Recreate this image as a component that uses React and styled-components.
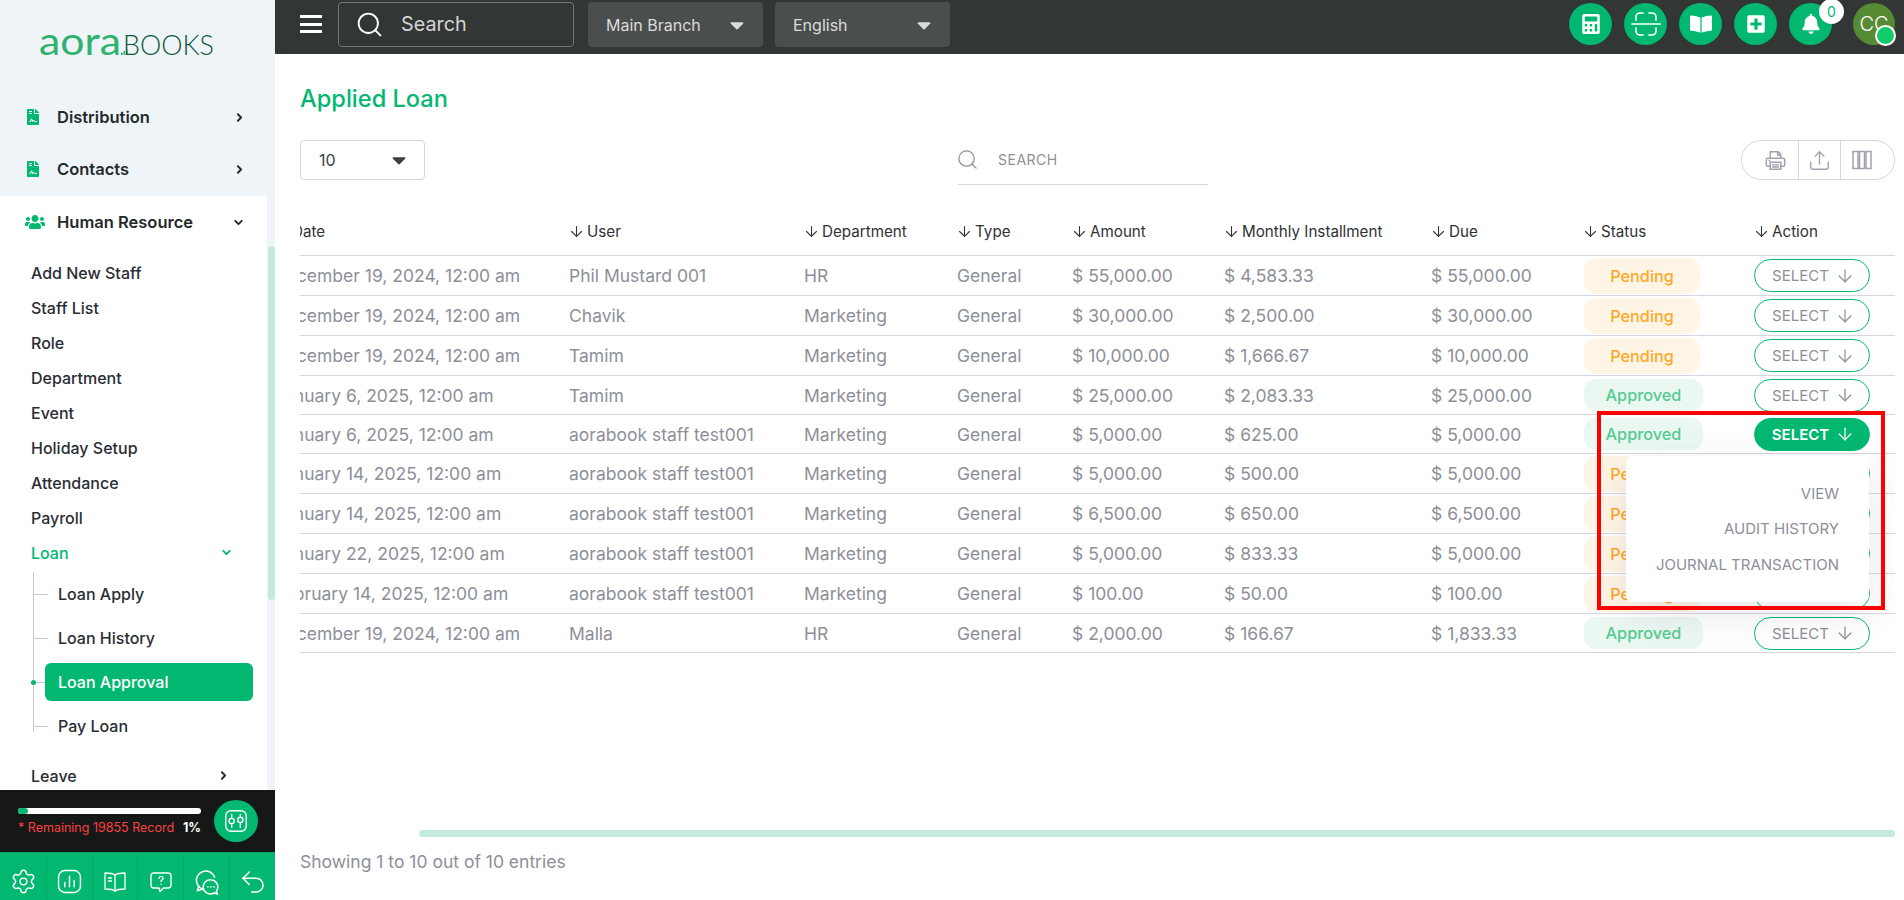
import React from 'react';
import styled, { createGlobalStyle } from 'styled-components';
import { ArrowDown, ChevronRight, ChevronDown, Settings, Undo2, Search as SearchIcon } from 'lucide-react';
import { FaFileContract, FaUsers, FaCalculator, FaBookOpen, FaPlusSquare, FaBell, FaCaretDown } from 'react-icons/fa';

const GREEN = '#02b871';
const LINE = '#d7d5e2';
const GRAY = '#8d8f99';

const Global = createGlobalStyle`
  html, body { margin: 0; padding: 0; height: 100%; overflow: hidden; background: #fff; }
  * { box-sizing: border-box; }
  body { font-family: Inter, "Liberation Sans", sans-serif; }
`;

const Page = styled.div`
  position: relative;
  display: flex;
  width: 1904px;
  height: 900px;
  overflow: hidden;
`;

/* ---------- Sidebar ---------- */
const Sidebar = styled.aside`
  width: 275px;
  flex: none;
  height: 900px;
  display: flex;
  flex-direction: column;
  background: #eff4f9;
`;
const LogoBox = styled.div`
  height: 91px;
  flex: none;
  padding: 28px 0 0 39px;
`;
const TopItem = styled.div`
  height: 52px;
  flex: none;
  display: flex;
  align-items: center;
  padding: 0 ${p => p.$pr || 29}px 0 25px;
  color: #25292b;
  font-size: 16.5px;
  font-weight: 600;
  white-space: nowrap;
  span { flex: 1; }
`;
const Lead = styled.div`
  width: 32px;
  flex: none;
  display: flex;
  align-items: center;
  color: ${GREEN};
`;
const MenuScroll = styled.div`
  position: relative;
  flex: 1;
  min-height: 0;
  margin-top: 1px;
  overflow: hidden;
`;
const WhitePanel = styled.div`
  width: 267px;
  height: 100%;
  background: #fff;
  overflow: hidden;
`;
const Thumb = styled.div`
  position: absolute;
  top: 50px;
  right: 0;
  width: 7px;
  height: 354px;
  border-radius: 4px;
  background: #c3ebdd;
`;
const SubList = styled.div`
  padding-top: 7px;
`;
const SubItem = styled.div`
  height: 35px;
  display: flex;
  align-items: center;
  padding: 0 ${p => p.$pr || 34}px 0 31px;
  font-size: 16px;
  font-weight: 500;
  color: ${p => (p.$active ? GREEN : '#2a2d34')};
  span { flex: 1; }
`;
const Tree = styled.div`
  position: relative;
  margin: 2px 0 10px;
  &::before {
    content: '';
    position: absolute;
    left: 33px;
    top: 0;
    bottom: 16px;
    width: 1px;
    background: #c9c8d2;
  }
`;
const TreeItem = styled.div`
  position: relative;
  display: flex;
  align-items: center;
  margin: ${p => (p.$active ? 3 : 0)}px 14px ${p => (p.$active ? 3 : 0)}px 45px;
  padding: 0 13px;
  font-size: 16px;
  font-weight: 500;
  border-radius: 6px;
  height: ${p => (p.$active ? 38 : 44)}px;
  color: ${p => (p.$active ? '#fff' : '#2a2d34')};
  background: ${p => (p.$active ? GREEN : 'transparent')};
  &::before {
    content: '';
    position: absolute;
    left: -12px;
    width: ${p => (p.$active ? 12 : 15)}px;
    height: 1px;
    top: 50%;
    background: #c9c8d2;
  }
  &::after {
    content: '';
    display: ${p => (p.$active ? 'block' : 'none')};
    position: absolute;
    left: -14px;
    top: calc(50% - 2px);
    width: 5px;
    height: 5px;
    border-radius: 50%;
    background: ${GREEN};
  }
`;
const RecordBar = styled.div`
  height: 62px;
  flex: none;
  background: #161818;
  display: flex;
  align-items: center;
  padding: 0 9px 0 18px;
  gap: 13px;
`;
const RecordInfo = styled.div`
  width: 183px;
  flex: none;
`;
const Progress = styled.div`
  height: 6px;
  border-radius: 3px;
  background: #fff;
  margin-bottom: 6px;
`;
const ProgressFill = styled.div`
  height: 100%;
  border-radius: 3px;
  background: ${GREEN};
`;
const RecordText = styled.div`
  display: flex;
  justify-content: space-between;
  font-size: 12.5px;
  line-height: 15px;
  color: #fb4040;
  white-space: nowrap;
  b { color: #fff; font-weight: 700; }
`;
const RoundGreen = styled.div`
  width: 44px;
  height: 42px;
  flex: none;
  border-radius: 50%;
  background: ${GREEN};
  color: #fff;
  display: flex;
  align-items: center;
  justify-content: center;
`;
const BottomBar = styled.div`
  height: 48px;
  flex: none;
  display: grid;
  grid-template-columns: 46px 46px 45px 46px 46px 46px;
  background: ${GREEN};
`;
const BottomCell = styled.div`
  display: flex;
  align-items: center;
  justify-content: center;
  color: #fff;
  padding-top: 10px;
  border-top: 1px solid #05a566;
  border-left: ${p => (p.$first ? 'none' : '1px solid #05a566')};
`;

/* ---------- Top bar ---------- */
const Main = styled.main`
  flex: 1;
  min-width: 0;
  height: 900px;
  display: flex;
  flex-direction: column;
`;
const TopBar = styled.header`
  height: 54px;
  flex: none;
  background: #323635;
  display: flex;
  align-items: center;
  padding: 0 9px 6px 25px;
`;
const Burger = styled.div`
  width: 22px;
  height: 18px;
  flex: none;
  margin-right: 16px;
  display: flex;
  flex-direction: column;
  justify-content: space-between;
  i { display: block; height: 3px; background: #fff; }
`;
const SearchBox = styled.div`
  width: 236px;
  height: 45px;
  flex: none;
  display: flex;
  align-items: center;
  gap: 17px;
  padding-left: 16px;
  border: 1px solid #6e7a76;
  border-radius: 4px;
  color: #d5d6d6;
  font-size: 19.8px;
`;
const DarkSelect = styled.div`
  width: 175px;
  height: 45px;
  flex: none;
  margin-left: ${p => p.$ml}px;
  display: flex;
  align-items: center;
  justify-content: space-between;
  padding: 1px 15px 0 18px;
  border-radius: 4px;
  background: #4a4e4d;
  color: #dcdcdc;
  font-size: 16px;
`;
const TopRight = styled.div`
  margin-left: auto;
  display: flex;
  align-items: center;
  gap: 12px;
`;
const CircleBtn = styled.div`
  position: relative;
  width: 43px;
  height: 42px;
  border-radius: 50%;
  background: ${GREEN};
  color: #fff;
  display: flex;
  align-items: center;
  justify-content: center;
`;
const Badge = styled.div`
  position: absolute;
  top: -4px;
  right: -12px;
  width: 25px;
  height: 25px;
  border-radius: 50%;
  background: #fff;
  color: ${GREEN};
  font-size: 14px;
  display: flex;
  align-items: center;
  justify-content: center;
`;
const Avatar = styled.div`
  position: relative;
  width: 42px;
  height: 42px;
  margin-left: 9px;
  border-radius: 50%;
  background: #568a33;
  color: #fff;
  font-size: 20px;
  font-weight: 300;
  display: flex;
  align-items: center;
  justify-content: center;
  &::after {
    content: '';
    position: absolute;
    right: -1px;
    bottom: -1px;
    width: 17px;
    height: 17px;
    border-radius: 50%;
    background: #12cc6a;
    border: 2px solid #fff;
  }
`;

/* ---------- Content ---------- */
const Content = styled.div`
  flex: 1;
  min-height: 0;
  display: flex;
  flex-direction: column;
  padding: 0 9px 0 25px;
`;
const Title = styled.h1`
  margin: 31px 0 0;
  height: 28px;
  line-height: 28px;
  font-size: 23.6px;
  font-weight: 500;
  color: ${GREEN};
`;
const Toolbar = styled.div`
  margin-top: 27px;
  display: flex;
  justify-content: space-between;
  align-items: flex-start;
`;
const PageSize = styled.div`
  width: 125px;
  height: 40px;
  display: flex;
  align-items: center;
  justify-content: space-between;
  padding: 0 14px 0 18px;
  border: 1px solid ${LINE};
  border-radius: 4px;
  font-size: 16px;
  color: #3a3f44;
`;
const TableSearch = styled.div`
  width: 250px;
  height: 45px;
  display: flex;
  align-items: center;
  gap: 19px;
  padding-bottom: 5px;
  border-bottom: 1px solid ${LINE};
  color: ${GRAY};
  font-size: 14px;
  letter-spacing: 0.5px;
  svg { margin-left: -2px; }
`;
const Tools = styled.div`
  width: 154px;
  height: 40px;
  display: grid;
  grid-template-columns: 56px 42px 1fr;
  border: 1px solid ${LINE};
  border-radius: 20px;
  color: #a0a2ad;
`;
const ToolCell = styled.div`
  display: flex;
  align-items: center;
  justify-content: ${p => p.$j || 'center'};
  padding: 0 ${p => p.$pr || 0}px 0 ${p => p.$pl || 0}px;
  border-left: ${p => (p.$sep ? `1px solid ${LINE}` : 'none')};
`;
const TableWrap = styled.div`
  overflow: hidden;
  margin-top: 24px;
  padding-bottom: 40px;
`;
const Grid = styled.div`
  margin-left: -26px;
`;
const Row = styled.div`
  display: grid;
  grid-template-columns: 295px 235px 153px 115px 152px 207px 152px 171px 141px;
  align-items: center;
  height: ${p => p.$h}px;
  border-bottom: 1px solid ${LINE};
  font-size: 17.5px;
  color: ${GRAY};
  white-space: nowrap;
`;
const HeadRow = styled(Row)`
  font-size: 15.2px;
  color: #2f3237;
`;
const HeadCell = styled.div`
  display: flex;
  align-items: center;
  gap: 2px;
  padding-bottom: 1px;
  svg { margin-left: -1px; }
`;
const Pill = styled.div`
  width: ${p => (p.$ok ? 119 : 116)}px;
  height: ${p => (p.$ok ? 32 : 36)}px;
  margin-left: 1px;
  display: flex;
  align-items: center;
  justify-content: center;
  border-radius: 12px;
  font-size: 16.3px;
  font-weight: 500;
  color: ${p => (p.$ok ? '#55cb91' : '#ffa726')};
  background: ${p => (p.$ok ? '#ebf8f2' : '#fff5e6')};
`;
const ActionCell = styled.div`
  position: relative;
`;
const SelectBtn = styled.div`
  width: 116px;
  height: 33px;
  display: flex;
  align-items: center;
  justify-content: center;
  gap: 6px;
  padding-left: 3px;
  border: 1px solid ${GREEN};
  border-radius: 17px;
  font-size: 15px;
  font-weight: ${p => (p.$on ? 600 : 400)};
  color: ${p => (p.$on ? '#fff' : GRAY)};
  background: ${p => (p.$on ? GREEN : '#fff')};
`;
const Dropdown = styled.div`
  position: absolute;
  top: 38px;
  right: 26px;
  width: 243px;
  height: 146px;
  padding: 20px 30px 0 0;
  border-radius: 6px;
  background: #fff;
  box-shadow: 0 10px 40px rgba(60, 60, 90, 0.12);
  z-index: 5;
`;
const DropItem = styled.div`
  height: 35.5px;
  display: flex;
  align-items: center;
  justify-content: flex-end;
  font-size: 15px;
  color: ${GRAY};
`;
const ScrollTrack = styled.div`
  margin-top: auto;
  display: flex;
  justify-content: flex-end;
`;
const ScrollThumb = styled.div`
  width: 1476px;
  height: 7px;
  border-radius: 4px;
  background: #c3ebdd;
`;
const Footer = styled.div`
  margin: 16px 0 30px;
  height: 17px;
  line-height: 17px;
  font-size: 17.5px;
  color: ${GRAY};
`;
const Callout = styled.div`
  position: absolute;
  left: 1597px;
  top: 411px;
  width: 288px;
  height: 199px;
  border: 4px solid #ff0000;
  pointer-events: none;
  z-index: 9;
`;

/* ---------- Drawings ---------- */
const stroke = { fill: 'none', stroke: 'currentColor', strokeLinecap: 'round', strokeLinejoin: 'round' };
const Logo = () => (
  <svg width="180" height="36" viewBox="0 0 180 36">
    <text x="0" y="27" fontFamily="Lato, Inter, sans-serif" fontWeight="400" fontSize="38" fill="#2fb26d" textLength="82" lengthAdjust="spacingAndGlyphs">aora</text>
    <g fill="#2fb26d">
      <rect x="82" y="24.5" width="1.6" height="2.5" />
      <rect x="84.5" y="23" width="1.6" height="4" />
      <rect x="87" y="21.5" width="1.6" height="5.5" />
    </g>
    <text x="84" y="27" fontFamily="Lato, Inter, sans-serif" fontWeight="300" fontSize="26.5" fill="#0b5a37" textLength="91" lengthAdjust="spacingAndGlyphs">BOOKS</text>
  </svg>
);
const ScanIcon = () => (
  <svg width="30" height="26" viewBox="0 0 30 26" {...stroke} strokeWidth="1.7">
    <path d="M5 9V6a4 4 0 0 1 4-4h3M18 2h3a4 4 0 0 1 4 4v3M5 17v3a4 4 0 0 0 4 4h3M18 24h3a4 4 0 0 0 4-4v-3M1 13h28" />
  </svg>
);
const Sliders = () => (
  <svg width="26" height="26" viewBox="0 0 24 24" {...stroke} strokeWidth="1.3">
    <rect x="2.5" y="2.5" width="19" height="19" rx="5" />
    <path d="M8 6v3M8 15v3M16 6v2M16 14v4" />
    <circle cx="8" cy="12" r="2.4" />
    <circle cx="16" cy="11" r="2.4" />
  </svg>
);
const ChartBox = () => (
  <svg width="25" height="25" viewBox="0 0 24 24" {...stroke} strokeWidth="1.4">
    <rect x="1.5" y="1.5" width="21" height="21" rx="6" />
    <path d="M7.5 17v-4M12 17V7M16.5 17v-6" />
  </svg>
);
const BookIcon = () => (
  <svg width="24" height="24" viewBox="0 0 24 24" {...stroke} strokeWidth="1.3">
    <path d="M12 5C10 3.5 6 3 2 3v16c4 0 8 .5 10 2 2-1.5 6-2 10-2V3c-4 0-8 .5-10 2z" />
    <path d="M12 5v16M5.5 8h3M5.5 11h3" />
  </svg>
);
const AskIcon = () => (
  <svg width="24" height="24" viewBox="0 0 24 24" {...stroke} strokeWidth="1.4">
    <path d="M5 3h14a3 3 0 0 1 3 3v9a3 3 0 0 1-3 3h-4.5L11 21.5 10 18H5a3 3 0 0 1-3-3V6a3 3 0 0 1 3-3z" />
    <path d="M10 8.2a2 2 0 1 1 2.8 2c-.6.3-.8.7-.8 1.3M12 14.2v.1" />
  </svg>
);
const ChatIcon = () => (
  <svg width="26" height="26" viewBox="0 0 24 24" {...stroke} strokeWidth="1.4">
    <path d="M8 18.5A8.6 8.6 0 1 1 19 7.5" />
    <path d="M8.5 18.5 3 20l1.4-4" />
    <path d="M15.5 10a6.5 6.5 0 0 1 6.5 6.5c0 1.5-.5 2.8-1.3 3.8l.8 2.7-3-1a6.5 6.5 0 1 1-3-12z" />
    <path d="M12.8 16.5h.1M15.6 16.5h.1M18.4 16.5h.1" />
  </svg>
);
const PrintIcon = () => (
  <svg width="21" height="21" viewBox="0 0 24 24" fill="none" stroke="currentColor" strokeWidth="1.7">
    <path d="M6 10V2h9l3 3v5" />
    <path d="M14.5 2v4H18" />
    <rect x="1.5" y="9.5" width="21" height="9" rx="1.5" />
    <rect x="6" y="14" width="12" height="8" fill="#fff" />
    <path d="M8 17h8M8 19.5h8M4 12h2" />
  </svg>
);
const ShareIcon = () => (
  <svg width="21" height="21" viewBox="0 0 24 24" {...stroke} strokeWidth="1.6">
    <path d="M12 16V2M7 7l5-5 5 5" />
    <path d="M2 14v6a2 2 0 0 0 2 2h16a2 2 0 0 0 2-2v-6" />
  </svg>
);
const ColumnsIcon = () => (
  <svg width="20" height="20" viewBox="0 0 20 20" fill="none" stroke="currentColor" strokeWidth="1.5">
    <rect x="1" y="1.5" width="5" height="17" />
    <rect x="7.5" y="1.5" width="5" height="17" />
    <rect x="14" y="1.5" width="5" height="17" />
  </svg>
);

/* ---------- Data ---------- */
const D1 = 'December 19, 2024, 12:00 am';
const S = 'aorabook staff test001';
const rows = [
  [D1, 'Phil Mustard 001', 'HR', '55,000.00', '4,583.33', '55,000.00', 0],
  [D1, 'Chavik', 'Marketing', '30,000.00', '2,500.00', '30,000.00', 0],
  [D1, 'Tamim', 'Marketing', '10,000.00', '1,666.67', '10,000.00', 0],
  ['January 6, 2025, 12:00 am', 'Tamim', 'Marketing', '25,000.00', '2,083.33', '25,000.00', 1],
  ['January 6, 2025, 12:00 am', S, 'Marketing', '5,000.00', '625.00', '5,000.00', 1],
  ['January 14, 2025, 12:00 am', S, 'Marketing', '5,000.00', '500.00', '5,000.00', 0],
  ['January 14, 2025, 12:00 am', S, 'Marketing', '6,500.00', '650.00', '6,500.00', 0],
  ['January 22, 2025, 12:00 am', S, 'Marketing', '5,000.00', '833.33', '5,000.00', 0],
  ['February 14, 2025, 12:00 am', S, 'Marketing', '100.00', '50.00', '100.00', 0],
  [D1, 'Malla', 'HR', '2,000.00', '166.67', '1,833.33', 1],
];
const heads = ['Date', 'User', 'Department', 'Type', 'Amount', 'Monthly Installment', 'Due', 'Status', 'Action'];
const subs = ['Add New Staff', 'Staff List', 'Role', 'Department', 'Event', 'Holiday Setup', 'Attendance', 'Payroll'];
const Chev = ({ down }) => (down
  ? <ChevronDown size={13} strokeWidth={3.5} />
  : <ChevronRight size={13} strokeWidth={3.5} />);

export default function App() {
  return (
    <Page>
      <Global />
      <Sidebar>
        <LogoBox><Logo /></LogoBox>
        <TopItem><Lead><FaFileContract size={16} /></Lead><span>Distribution</span><Chev /></TopItem>
        <TopItem><Lead><FaFileContract size={16} /></Lead><span>Contacts</span><Chev /></TopItem>
        <MenuScroll>
          <WhitePanel>
            <TopItem $pr={22}><Lead><FaUsers size={20} /></Lead><span>Human Resource</span><Chev down /></TopItem>
            <SubList>
              {subs.map(s => <SubItem key={s}><span>{s}</span></SubItem>)}
              <SubItem $active><span>Loan</span><Chev down /></SubItem>
              <Tree>
                <TreeItem>Loan Apply</TreeItem>
                <TreeItem>Loan History</TreeItem>
                <TreeItem $active>Loan Approval</TreeItem>
                <TreeItem>Pay Loan</TreeItem>
              </Tree>
              <SubItem $pr={37}><span>Leave</span><Chev /></SubItem>
            </SubList>
          </WhitePanel>
          <Thumb />
        </MenuScroll>
        <RecordBar>
          <RecordInfo>
            <Progress><ProgressFill style={{ width: '10px' }} /></Progress>
            <RecordText><span>* Remaining 19855 Record</span><b>1%</b></RecordText>
          </RecordInfo>
          <RoundGreen><Sliders /></RoundGreen>
        </RecordBar>
        <BottomBar>
          <BottomCell $first><Settings size={27} strokeWidth={1.3} /></BottomCell>
          <BottomCell><ChartBox /></BottomCell>
          <BottomCell><BookIcon /></BottomCell>
          <BottomCell><AskIcon /></BottomCell>
          <BottomCell><ChatIcon /></BottomCell>
          <BottomCell><Undo2 size={30} strokeWidth={1.3} /></BottomCell>
        </BottomBar>
      </Sidebar>

      <Main>
        <TopBar>
          <Burger><i /><i /><i /></Burger>
          <SearchBox><SearchIcon size={29} strokeWidth={1.6} color="#fff" />Search</SearchBox>
          <DarkSelect $ml={14}>Main Branch<FaCaretDown size={22} /></DarkSelect>
          <DarkSelect $ml={12}>English<FaCaretDown size={22} /></DarkSelect>
          <TopRight>
            <CircleBtn><FaCalculator size={20} /></CircleBtn>
            <CircleBtn><ScanIcon /></CircleBtn>
            <CircleBtn><FaBookOpen size={22} /></CircleBtn>
            <CircleBtn><FaPlusSquare size={20} /></CircleBtn>
            <CircleBtn><FaBell size={20} /><Badge>0</Badge></CircleBtn>
            <Avatar>CC</Avatar>
          </TopRight>
        </TopBar>
        <Content>
          <Title>Applied Loan</Title>
          <Toolbar>
            <PageSize>10<FaCaretDown size={22} color="#3b4144" /></PageSize>
            <TableSearch><SearchIcon size={23} strokeWidth={1.3} />SEARCH</TableSearch>
            <Tools>
              <ToolCell $j="flex-end" $pr={12}><PrintIcon /></ToolCell>
              <ToolCell $sep><ShareIcon /></ToolCell>
              <ToolCell $sep $j="flex-start" $pl={11}><ColumnsIcon /></ToolCell>
            </Tools>
          </Toolbar>
          <TableWrap>
            <Grid>
              <HeadRow $h={47}>
                {heads.map(h => <HeadCell key={h}><ArrowDown size={17} strokeWidth={1.5} />{h}</HeadCell>)}
              </HeadRow>
              {rows.map((r, i) => (
                <Row key={i} $h={r[6] ? 39 : 40}>
                  <div>{r[0]}</div>
                  <div>{r[1]}</div>
                  <div>{r[2]}</div>
                  <div>General</div>
                  <div>$ {r[3]}</div>
                  <div>$ {r[4]}</div>
                  <div>$ {r[5]}</div>
                  <div><Pill $ok={r[6] === 1}>{r[6] ? 'Approved' : 'Pending'}</Pill></div>
                  <ActionCell>
                    <SelectBtn $on={i === 4}>SELECT<ArrowDown size={20} strokeWidth={1.5} /></SelectBtn>
                    {i === 4 && (
                      <Dropdown>
                        <DropItem>VIEW</DropItem>
                        <DropItem>AUDIT HISTORY</DropItem>
                        <DropItem>JOURNAL TRANSACTION</DropItem>
                      </Dropdown>
                    )}
                  </ActionCell>
                </Row>
              ))}
            </Grid>
          </TableWrap>
          <ScrollTrack><ScrollThumb /></ScrollTrack>
          <Footer>Showing 1 to 10 out of 10 entries</Footer>
        </Content>
      </Main>
      <Callout />
    </Page>
  );
}
